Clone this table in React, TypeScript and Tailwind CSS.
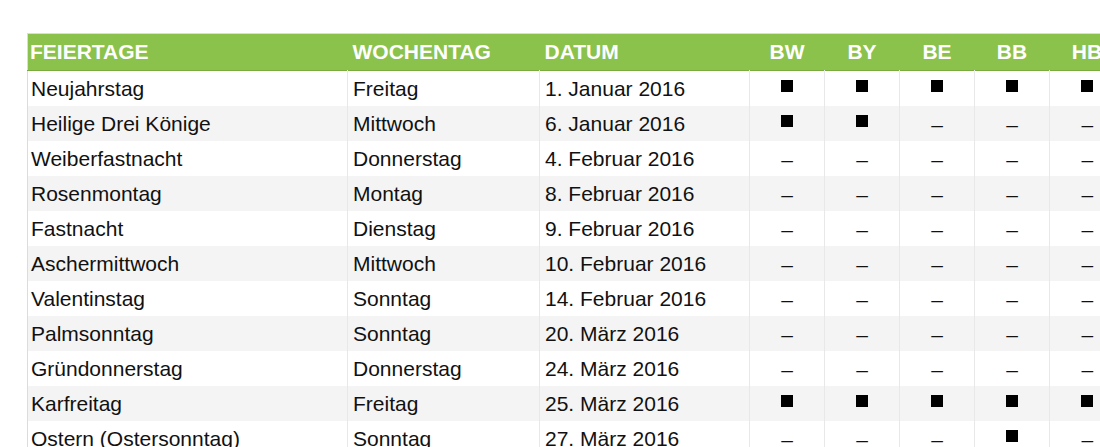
import React from "react";

type Row = [string, string, string, number[]];

const rows: Row[] = [
  ["Neujahrstag", "Freitag", "1. Januar 2016", [1, 1, 1, 1, 1]],
  ["Heilige Drei Könige", "Mittwoch", "6. Januar 2016", [1, 1, 0, 0, 0]],
  ["Weiberfastnacht", "Donnerstag", "4. Februar 2016", [0, 0, 0, 0, 0]],
  ["Rosenmontag", "Montag", "8. Februar 2016", [0, 0, 0, 0, 0]],
  ["Fastnacht", "Dienstag", "9. Februar 2016", [0, 0, 0, 0, 0]],
  ["Aschermittwoch", "Mittwoch", "10. Februar 2016", [0, 0, 0, 0, 0]],
  ["Valentinstag", "Sonntag", "14. Februar 2016", [0, 0, 0, 0, 0]],
  ["Palmsonntag", "Sonntag", "20. März 2016", [0, 0, 0, 0, 0]],
  ["Gründonnerstag", "Donnerstag", "24. März 2016", [0, 0, 0, 0, 0]],
  ["Karfreitag", "Freitag", "25. März 2016", [1, 1, 1, 1, 1]],
  ["Ostern (Ostersonntag)", "Sonntag", "27. März 2016", [0, 0, 0, 1, 0]],
];

const states = ["BW", "BY", "BE", "BB", "HB"];

export default function App() {
  return (
    <div
      className="w-[1100px] h-[447px] overflow-hidden bg-white text-[#111]"
      style={{ fontFamily: '"Liberation Sans", Arial, sans-serif' }}
    >
      <div className="pt-[33px] pl-[27px]">
        <table className="border-collapse table-fixed w-[1097px] border-l border-t border-[#dcdcdc]">
          <colgroup>
            <col className="w-[320px]" />
            <col className="w-[192px]" />
            <col className="w-[210px]" />
            <col className="w-[75px]" />
            <col className="w-[75px]" />
            <col className="w-[75px]" />
            <col className="w-[75px]" />
            <col className="w-[75px]" />
          </colgroup>
          <thead>
            <tr className="bg-[#8bc24c] text-white h-[37px] border-b border-[#79ab3f]">
              <th className="text-left font-bold text-[21px] pl-[2px] pb-[1px]">FEIERTAGE</th>
              <th className="text-left font-bold text-[21px] pl-[5px] pb-[1px]">WOCHENTAG</th>
              <th className="text-left font-bold text-[21px] pl-[5px] pb-[1px]">DATUM</th>
              {states.map((s) => (
                <th key={s} className="text-center font-bold text-[21px] pb-[1px]">
                  {s}
                </th>
              ))}
            </tr>
          </thead>
          <tbody>
            {rows.map((r, i) => (
              <tr key={r[0]} className={`h-[35px] text-[21px] leading-none ${i % 2 === 1 ? "bg-[#f4f4f4]" : "bg-white"}`}>
                <td className="pl-[3px] whitespace-nowrap">{r[0]}</td>
                <td className="pl-[5px] border-l border-[#e8e8e8] whitespace-nowrap">{r[1]}</td>
                <td className="pl-[5px] border-l border-[#e8e8e8] whitespace-nowrap">{r[2]}</td>
                {r[3].map((v, j) => (
                  <td key={j} className="text-center border-l border-[#e8e8e8]">
                    {v ? (
                      <span className="inline-block w-[12px] h-[12px] bg-black align-middle mb-[7px]" />
                    ) : (
                      <span className="inline-block pt-[2px]">–</span>
                    )}
                  </td>
                ))}
              </tr>
            ))}
          </tbody>
        </table>
      </div>
    </div>
  );
}
